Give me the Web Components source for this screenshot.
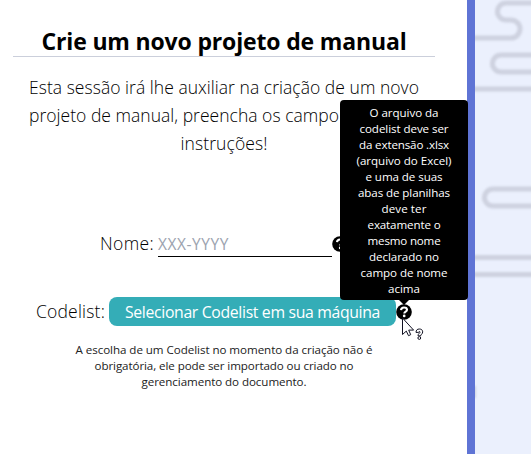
<!DOCTYPE html>
<html lang="pt-BR">
<head>
<meta charset="utf-8">
<title>Crie um novo projeto de manual</title>
<style>
html,body{margin:0;height:100%;overflow:hidden;background:#fff;font-family:"Open Sans","Noto Sans",sans-serif;color:#000}
</style>
</head>
<body>
<manual-page></manual-page>
<script>
const define = (name, html, ready) => {
  const t = document.createElement('template');
  t.innerHTML = html;
  customElements.define(name, class extends HTMLElement {
    connectedCallback() {
      if (this.shadowRoot) return;
      this.attachShadow({mode: 'open'}).append(t.content.cloneNode(true));
      if (ready) ready(this);
    }
  });
};

// One line of text, tracked so that it fills the width in its "w" attribute.
define('text-line', `<style>
:host{display:block;white-space:nowrap;margin:0 auto}
span{display:inline-block}
</style><span><slot></slot></span>`, el => {
  const w = +el.getAttribute('w');
  el.style.width = w + 'px';
  const span = el.shadowRoot.querySelector('span');
  const natural = span.getBoundingClientRect().width;
  span.style.letterSpacing = (w - natural) / el.textContent.length + 'px';
});

define('help-icon', `<style>
:host{display:block;width:16px;height:16px}svg{display:block}
</style><svg width="16" height="16" viewBox="0 0 16 16"><circle cx="8" cy="8" r="7.800" fill="#000"/>
<path d="M5 6.200C5.200 4.200 6.400 3.500 8 3.500c1.800 0 3 .9 3 2.300 0 1.900-2.700 1.700-2.700 3.700" fill="none" stroke="#fff" stroke-width="2.100"/>
<circle cx="8.200" cy="11.900" r="1.350" fill="#fff"/></svg>`);

define('page-title', `<style>
:host{display:block;width:422px;height:29px;margin:28px 0 0 13px;border-bottom:1px solid #cbcfdb;font-size:23px;line-height:27px;font-weight:700;box-sizing:border-box}
</style><slot></slot>`);

define('intro-text', `<style>
:host{display:block;width:422px;margin:16px 0 0 13px;font-size:17.500px;line-height:28px;font-weight:300;color:#000}
.left{margin-left:16px}
</style>
<text-line w="390">Esta sessão irá lhe auxiliar na criação de um novo</text-line>
<text-line class="left" w="310">projeto de manual, preencha os campo</text-line>
<text-line w="87">instruções!</text-line>`);

define('name-field', `<style>
:host{display:flex;height:27px;margin:73px 0 0 100px;font-size:17.500px;line-height:27px;font-weight:300}
text-line{margin:0}
.input{box-sizing:border-box;width:174px;height:27px;margin-left:4px;border-bottom:1px solid #000;color:#9ca3af;font-size:15.500px;line-height:28px;font-weight:400}
help-icon{margin-top:6px}
</style><text-line w="54">Nome:</text-line><div class="input"><text-line w="71">XXX-YYYY</text-line></div><help-icon></help-icon>`);

define('code-field', `<style>
:host{display:flex;height:29px;margin:40px 0 0 36px;font-size:17.500px;line-height:29px;font-weight:300}
text-line{margin:0}
.button{box-sizing:border-box;width:287px;height:29px;margin-left:4px;padding-left:16px;line-height:31px;border-radius:8px;background:#34adb7;color:#fff;font-size:15.800px;font-weight:400}
help-icon{margin-top:7px}
</style><text-line w="69">Codelist:</text-line><div class="button"><text-line w="255">Selecionar Codelist em sua máquina</text-line></div><help-icon></help-icon>`);

define('field-note', `<style>
:host{display:block;width:422px;margin:16px 0 0 13px;font-size:11.600px;line-height:16px;font-weight:400;color:#222}
</style>
<text-line w="297">A escolha de um Codelist no momento da criação não é</text-line>
<text-line w="259">obrigatória, ele pode ser importado ou criado no</text-line>
<text-line w="165">gerenciamento do documento.</text-line>`);

define('tool-tip', `<style>
:host{display:block;position:absolute;left:340px;top:100px;width:128px;height:200px;box-sizing:border-box;padding:5px 0 3px;border-radius:4px;background:#000;color:#fff;font-size:11.600px;line-height:16px}
:host::after{content:"";position:absolute;left:59px;top:100%;border:5px solid transparent;border-top-color:#000}
</style>
<text-line w="69">O arquivo da</text-line><text-line w="89">codelist deve ser</text-line>
<text-line w="90">da extensão .xlsx</text-line><text-line w="95">(arquivo do Excel)</text-line>
<text-line w="77">e uma de suas</text-line><text-line w="92">abas de planilhas</text-line>
<text-line w="45">deve ter</text-line><text-line w="73">exatamente o</text-line>
<text-line w="73">mesmo nome</text-line><text-line w="70">declarado no</text-line>
<text-line w="87">campo de nome</text-line><text-line w="32">acima</text-line>`);

define('help-cursor', `<style>
:host{display:block;position:absolute;left:402px;top:317px}svg{display:block}
</style><svg width="24" height="26" viewBox="0 0 24 26" stroke="#111122" fill="#fff">
<path d="M.500 1v16.500l3.800-3.400 2.200 4.600 2.200-1-2-4.600h4.900z" stroke-width="1"/>
<path d="M14 15.400c0-2.200 1.200-3.400 3.300-3.400s3.400 1.100 3.400 2.900c0 2.200-2.100 2.500-2.100 4h-2.600c0-2.400 2-2.600 2-3.800 0-.9-1.400-.8-1.400.3z" stroke-width="1"/>
<circle cx="17.300" cy="21" r="1.400"/></svg>`);

define('side-art', `<style>
:host{display:block;width:56px;height:454px;background:#ebf0fd;overflow:hidden}svg{display:block}
path{filter:blur(1.300px)}
</style><svg width="56" height="454" viewBox="0 0 56 454" fill="none" stroke="#ced2e0" stroke-width="5">
<path d="M66 3H31a8.500 8.500 0 0 0 0 17h5a9 9 0 0 1 0 18H-10M66 55H26a8.500 8.500 0 0 0 0 17H66M-10 89H66M66 189H18a8.500 8.500 0 0 0 0 17H66M-10 257.500H66M-10 274.500H66"/>
<path d="M-1 386v12" stroke-width="4"/></svg>`);

define('manual-page', `<style>
:host{display:flex;position:relative;width:531px;height:454px;overflow:hidden}
main{box-sizing:border-box;width:475px;height:454px;border-right:8px solid #5f74d5;display:flow-root}
</style>
<main>
<page-title><text-line w="365">Crie um novo projeto de manual</text-line></page-title>
<intro-text></intro-text>
<name-field></name-field>
<code-field></code-field>
<field-note></field-note>
</main>
<side-art></side-art>
<tool-tip></tool-tip>
<help-cursor></help-cursor>`);
</script>
</body>
</html>
